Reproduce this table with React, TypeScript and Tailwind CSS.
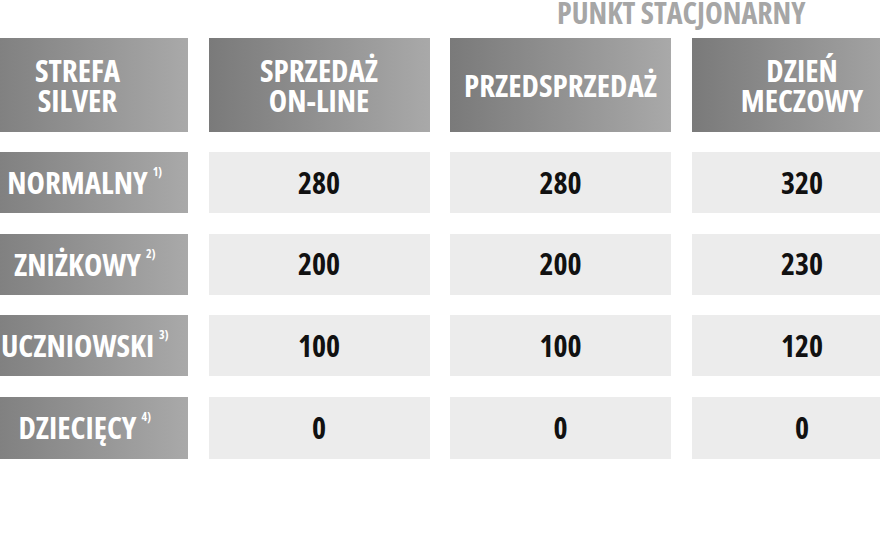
import React from "react";

const font = { fontFamily: '"Open Sans", "Liberation Sans Narrow", "Liberation Sans", sans-serif' };

const headers = [
  ["STREFA", "SILVER"],
  ["SPRZEDAŻ", "ON-LINE"],
  ["PRZEDSPRZEDAŻ"],
  ["DZIEŃ", "MECZOWY"],
];

const rows: { label: string; sup: string; vals: string[] }[] = [
  { label: "NORMALNY", sup: "1)", vals: ["280", "280", "320"] },
  { label: "ZNIŻKOWY", sup: "2)", vals: ["200", "200", "230"] },
  { label: "UCZNIOWSKI", sup: "3)", vals: ["100", "100", "120"] },
  { label: "DZIECIĘCY", sup: "4)", vals: ["0", "0", "0"] },
];

const grad = "bg-gradient-to-r from-[#7a7a7a] to-[#a9a9a9]";

export default function App() {
  return (
    <div className="w-[880px] h-[540px] overflow-hidden bg-white" style={font}>
      <div className="ml-[-33px] w-[946px] grid grid-cols-[221px_221px_221px_221px] grid-rows-[17px_94px_61px_61px_61px_62px] gap-x-[20.5px] gap-y-[20.5px] [font-stretch:75%] font-bold">
        <div className="col-start-3 col-span-2 flex justify-center items-start">
          <span className="text-[30px] leading-[26px] text-[#a6a6a6] whitespace-nowrap">PUNKT STACJONARNY</span>
        </div>
        {headers.map((h, i) => (
          <div
            key={i}
            className={`${grad} flex flex-col items-center justify-center text-white text-[31px] leading-[30px] text-center`}
          >
            {h.map((l) => (
              <span key={l}>{l}</span>
            ))}
          </div>
        ))}
        {rows.map((r) => (
          <React.Fragment key={r.label}>
            <div className={`${grad} flex items-center justify-center text-white text-[31px] leading-none`}>
              <span className="relative">
                {r.label}
                <span className="absolute left-full top-[-1px] ml-[5px] text-[12px] leading-none">{r.sup}</span>
              </span>
            </div>
            {r.vals.map((v, vi) => (
              <div
                key={vi}
                className="bg-[#ececec] flex items-center justify-center text-[#111111] text-[30px] leading-none"
              >
                {v}
              </div>
            ))}
          </React.Fragment>
        ))}
      </div>
    </div>
  );
}
